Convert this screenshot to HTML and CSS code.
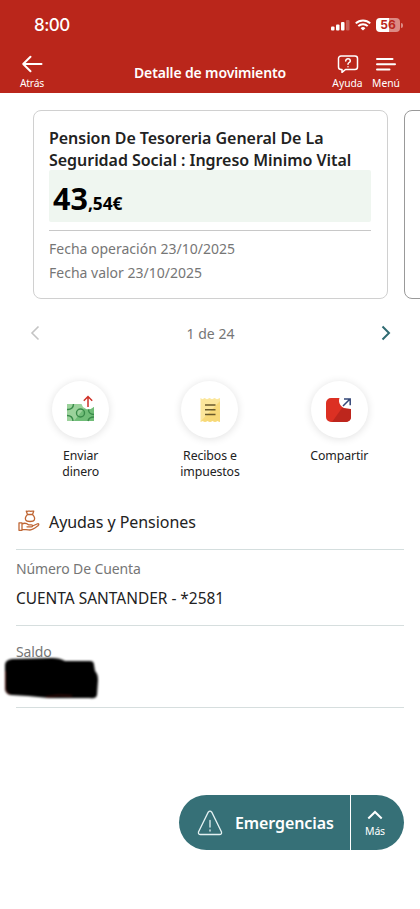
FILE: index.html
```html
<!DOCTYPE html>
<html lang="es">
<head>
<meta charset="utf-8">
<meta name="viewport" content="width=device-width, initial-scale=1">
<title>Detalle de movimiento</title>
<link rel="stylesheet" href="styles.css">
</head>
<body>
<header class="header">
  <div class="status">
    <span class="clock">8:00</span>
    <div class="status-icons">
      <svg width="19" height="11" viewBox="0 0 19 11" fill="#fff"><rect x="0" y="6.500" width="3.500" height="4" rx="1"/><rect x="5" y="4.500" width="3.500" height="6" rx="1"/><rect x="10" y="2" width="3.500" height="8.500" rx="1"/><rect x="15" y="0" width="3.500" height="10.500" rx="1" opacity=".25"/></svg>
      <svg class="wifi" width="16" height="12" viewBox="0 0 16 12" fill="none" stroke="#fff" stroke-width="2"><path d="M.8 4.400a10.300 10.300 0 0 1 14.400 0M3.300 7.100a6.700 6.700 0 0 1 9.400 0"/><path d="M8 11.600 5.600 9.200a3.400 3.400 0 0 1 4.800 0z" fill="#fff" stroke="none"/></svg>
      <span class="battery">56</span><i class="battery-tip"></i>
    </div>
  </div>
  <nav class="nav">
    <div class="nav-item back">
      <svg width="22" height="18" viewBox="0 0 22 18" fill="none" stroke="#fff" stroke-width="2" stroke-linecap="round" stroke-linejoin="round"><path d="M20.500 9H2.200M9.500 1.700 2.200 9l7.300 7.300"/></svg>
      <span>Atrás</span>
    </div>
    <h1 class="title">Detalle de movimiento</h1>
    <div class="nav-item help">
      <svg width="22" height="18" viewBox="0 0 22 18" fill="none" stroke="#fff" stroke-width="1.500" stroke-linecap="round" stroke-linejoin="round"><path d="M4 1h14a2.500 2.500 0 0 1 2.500 2.500v8.500a2.500 2.500 0 0 1-2.500 2.500H8.500L5 17.400V14.500H4A2.500 2.500 0 0 1 1.500 12V3.500A2.500 2.500 0 0 1 4 1z"/><path d="M8.700 5.900c0-2.900 4.600-2.700 4.600 0 0 1.600-2.300 1.600-2.300 3.300M11 11.700v.1"/></svg>
      <span>Ayuda</span>
    </div>
    <div class="nav-item menu">
      <svg width="22" height="18" viewBox="0 0 22 18" fill="none" stroke="#fff" stroke-width="2" stroke-linecap="round"><path d="M2 4h15.500M2 9.200h18M2 14.400h12.500"/></svg>
      <span>Menú</span>
    </div>
  </nav>
</header>
<main>
  <section class="carousel">
    <article class="card">
      <h2 class="card-title">Pension De Tesoreria General De La<br>Seguridad Social : Ingreso Minimo Vital</h2>
      <div class="amount"><span class="whole">43</span><span class="cents">,54€</span></div>
      <div class="dates"><p>Fecha operación 23/10/2025</p><p>Fecha valor 23/10/2025</p></div>
    </article>
    <article class="card next"></article>
  </section>
  <div class="pager">
    <svg width="10" height="16" viewBox="0 0 10 16" fill="none" stroke="#c4c4c4" stroke-width="1.600"><path d="M8.500 1.500 2 8l6.500 6.500"/></svg>
    <span>1 de 24</span>
    <svg width="10" height="16" viewBox="0 0 10 16" fill="none" stroke="#2f6b72" stroke-width="2"><path d="M1.500 1.500 8 8l-6.500 6.500"/></svg>
  </div>
  <section class="actions">
    <div class="action">
      <div class="bubble">
        <svg width="30" height="30" viewBox="0 0 30 30" fill="none"><path d="M1 9h14.500l1.500 3 4 2.500 4-.5 3-2v14H1z" fill="#9bd29b"/><path d="M18 13.500 21 14.500 25 14l3-2v14H8z" fill="#70bd78"/><g stroke="#398b4a" stroke-width="1.400"><circle cx="14.500" cy="18" r="4"/><path d="M1 14.500c4 .5 6.500-2 6.500-5.500M1 20.500c3.500 0 5.800 2 6 5.500M22.500 14.500c0 2.500 2 5 5.500 5M22 26c.5-2.500 2.500-4 6-4"/></g><path d="M22 12V1.500M17.800 5.700 22 1.500l4.200 4.200" stroke="#cf3128" stroke-width="1.500"/></svg>
      </div>
      <p>Enviar<br>dinero</p>
    </div>
    <div class="action">
      <div class="bubble">
        <svg width="30" height="30" viewBox="0 0 30 30" fill="none"><path d="M5.500 3l2 1.300 2-1.300 2.500 1.300L14.500 3 17 4.300 19.500 3 22 4.300 25 3v24l-2.500-1-2.500 1-2.500-1-2.500 1-2.500-1-2.500 1-2-1-2.500 1z" fill="#fbe69b"/><path d="m25 6-19.500 20.500 2-.5 2.500 1 2.500-1 2.500 1 2.500-1 2.500 1 2.500-1 2.500 1z" fill="#f7d978"/><path d="M10 10h10.500M10 14.700h10.500M10 19.500h10.500" stroke="#695a2b" stroke-width="1.400"/></svg>
      </div>
      <p>Recibos e<br>impuestos</p>
    </div>
    <div class="action">
      <div class="bubble">
        <svg width="30" height="30" viewBox="0 0 30 30" fill="none"><path d="M7 3h8.500c-2 5 2 12 11.500 11v8a5 5 0 0 1-5 5H7a5 5 0 0 1-5-5V8a5 5 0 0 1 5-5z" fill="#dc3023"/><path d="m18 13 9 1v8a5 5 0 0 1-5 5H8z" fill="#bd261d"/><path d="m19 11 7-7M20 4h6.200v6.200" stroke="#334778" stroke-width="1.500"/></svg>
      </div>
      <p>Compartir</p>
    </div>
  </section>
  <section class="details">
    <div class="category">
      <svg width="22" height="22" viewBox="0 0 22 22" fill="none" stroke="#bf6634" stroke-width="1.300" stroke-linecap="round" stroke-linejoin="round"><path d="M9.500 4.500 8.300 1.200c1.500.5 2.200-.5 3.700 0 1.500.5 2.300-.5 3.700 0l-1.200 3.300zM9.500 4.500C7.500 6.500 7 8.500 7.700 10c.7 1.500 1.700 1.500 4.300 1.500s3.700 0 4.300-1.500c.7-1.500.2-3.500-1.800-5.500M1 12.800h3v7.500H1zM4 14c3-1.500 5-.5 6.500.8h3c1.500 0 1.500 2 0 2H9M14.500 16l4.500-2c1.800-.7 2.500.5 1 1.700-3 2.500-5 4.300-8 4.300-3 0-5-.7-8-.7"/></svg>
      <span>Ayudas y Pensiones</span>
    </div>
    <div class="row account"><span class="label">Número De Cuenta</span><span class="value">CUENTA SANTANDER - *2581</span></div>
    <div class="row balance"><span class="label">Saldo</span>
      <svg class="scribble" width="98" height="48" viewBox="0 0 98 48"><path d="M2 8Q2 3 9 2L49 1Q57 1 62 4L87 4Q91 4 91 8L92 14Q95 17 95 23L94 38Q93 42 87 41L46 41 25 39 8 38Q2 37 2 31Z" fill="#000"/><path d="M2.500 14 2.500 30Q3 37 7 37M43 40Q57 37 69 39" fill="none" stroke="#52130d" stroke-width="1"/></svg>
    </div>
  </section>
</main>
<aside class="emergency">
  <div class="emergency-main">
    <svg width="26" height="26" viewBox="0 0 26 26" fill="none" stroke="#e4f1f2" stroke-width="1.300" stroke-linecap="round"><path d="M11.200 2.200q1.800-2 3.600 0L24.500 22q.5 2.500-2 2.500h-19q-2.500 0-2-2.500zM13 10.500v6.500M13 20v1"/></svg>
    <span>Emergencias</span>
  </div>
  <div class="more">
    <svg width="16" height="10" viewBox="0 0 16 10" fill="none" stroke="#fff" stroke-width="2"><path d="M1.300 8.500 8 2l6.700 6.500"/></svg>
    <span>Más</span>
  </div>
</aside>
</body>
</html>
```

FILE: styles.css
```css
* { box-sizing: border-box; }
body { margin: 0; min-height: 909px; background: #fff; color: #222; font-family: "Noto Sans", "Open Sans", sans-serif; display: flex; flex-direction: column; overflow: hidden; }
h1, h2, p { margin: 0; }
svg { display: block; flex: none; }
.header { height: 93px; background: #ba261b; color: #fff; }
.status { height: 50px; padding: 0 17px 0 34px; display: flex; align-items: center; justify-content: space-between; }
.clock { font: 500 17px/20px Inter, sans-serif; letter-spacing: -.5px; }
.status-icons { display: flex; align-items: center; }
.wifi { margin: 0 5px; }
.battery { width: 24px; height: 14px; border-radius: 4px; background: linear-gradient(90deg, #fff 56%, #dc8b84 56%); color: #ba261b; font: 700 12px/14px Inter, sans-serif; text-align: center; }
.battery-tip { width: 2px; height: 5px; margin-left: 1px; border-radius: 0 2px 2px 0; background: #dc8b84; }
.nav { display: grid; grid-template-columns: 64px 1fr 40px 38px 15px; padding-top: 5px; }
.nav-item { display: flex; flex-direction: column; align-items: center; gap: 3px; font-size: 10.300px; line-height: 14px; }
.back { letter-spacing: -.2px; }
.title { text-align: center; padding: 8px 0 0 29px; font-size: 14px; line-height: 20px; font-weight: 600; letter-spacing: -.14px; white-space: nowrap; }
.help { grid-column: 3; padding-left: 1px; }
.carousel { display: flex; gap: 16px; padding: 17px 0 0 33px; overflow: hidden; }
.card { flex: none; width: 355px; height: 189px; padding: 16px 16px 0; border: 1px solid #d0d0d0; border-radius: 8px; }
.card.next { border-color: #999; }
.card-title { font-size: 16px; line-height: 22px; font-weight: 600; white-space: nowrap; letter-spacing: -.04px; margin-left: -1px; }
.amount { height: 52px; margin: -1px 0 0 -1px; padding-left: 4px; background: #eff6f0; border-radius: 2px; color: #000; font-weight: 700; line-height: 57px; white-space: nowrap; }
.whole { font-size: 30.500px; }
.cents { font-size: 17.300px; }
.dates { margin: 8px 0 0 -1px; padding-top: 6px; border-top: 1px solid #c8c8c8; color: #767676; font-size: 14px; line-height: 24px; }
.pager { display: flex; justify-content: space-between; align-items: center; height: 24px; margin: 22px 29px 0 30px; color: #767676; font-size: 14px; }
.actions { display: grid; grid-template-columns: repeat(3, 1fr); width: 388px; margin: 36px auto 0; }
.action { display: flex; flex-direction: column; align-items: center; font-size: 12.300px; line-height: 16px; text-align: center; letter-spacing: -.1px; }
.bubble { width: 57px; height: 57px; border-radius: 50%; display: grid; place-items: center; box-shadow: 0 1px 9px rgba(0,0,0,.12); margin-bottom: 10px; background: #fff; }
.details { margin: 30px 16px 0; }
.category { height: 40px; display: flex; align-items: flex-start; gap: 9px; padding-left: 2px; font-size: 16px; line-height: 24px; letter-spacing: -.06px; border-bottom: 1px solid #d4dede; }
.row { display: flex; flex-direction: column; border-bottom: 1px solid #d6dede; }
.account { height: 76px; padding-top: 8px; }
.balance { height: 82px; padding-top: 15px; position: relative; }
.label { color: #767676; font-size: 14px; line-height: 22px; letter-spacing: -.12px; }
.value { margin-top: 7px; font-size: 15.450px; line-height: 22px; }
.scribble { position: absolute; left: -13px; top: 31px; filter: blur(.8px); }
.emergency { display: flex; align-self: flex-end; width: 225px; height: 55px; margin: 87px 16px 0 0; border-radius: 28px; overflow: hidden; background: #367077; color: #fff; }
.emergency-main { width: 172px; display: flex; align-items: center; gap: 12px; padding-left: 18px; border-right: 1px solid #fff; font-weight: 600; font-size: 16px; letter-spacing: -.1px; }
.more { width: 48px; display: flex; flex-direction: column; align-items: center; padding-top: 15px; font-size: 10.500px; line-height: 14px; letter-spacing: -.2px; gap: 4px; }
```
